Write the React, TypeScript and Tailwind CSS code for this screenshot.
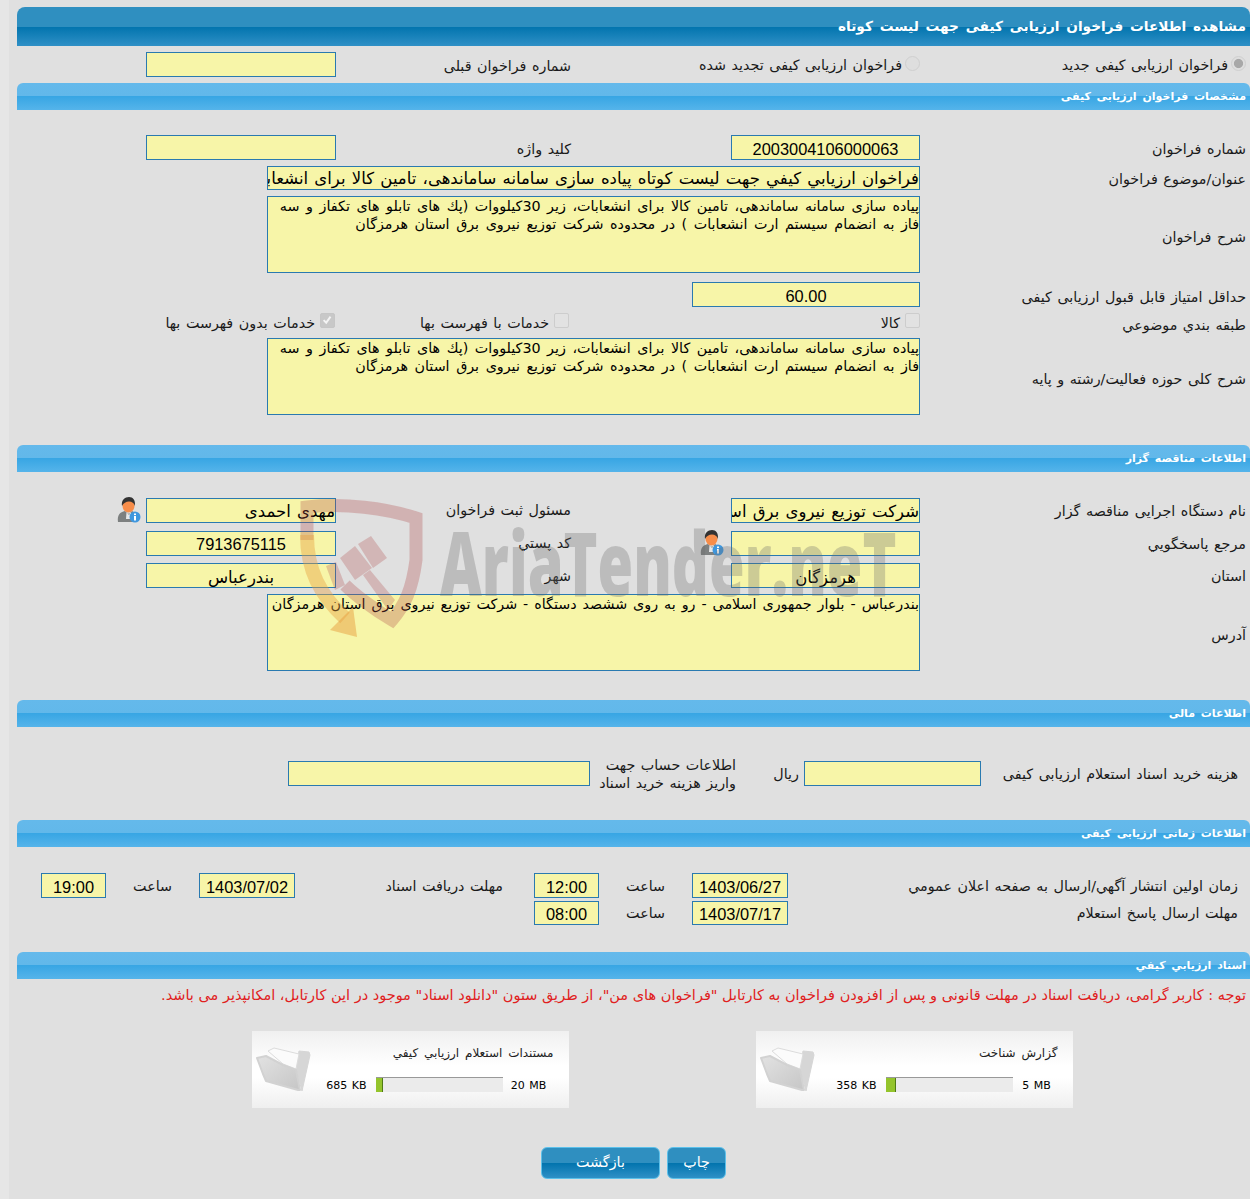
import React from 'react';

const desc =
  'پیاده سازی سامانه ساماندهی، تامین کالا برای انشعابات، زیر 30کیلووات (پك های تابلو های تكفاز و سه فاز به انضمام سیستم ارت انشعابات ) در محدوده شرکت توزیع نیروی برق استان هرمزگان';

const numberFont = "[font-family:'Liberation_Sans','DejaVu_Sans',sans-serif]";
const barGradient = 'bg-[linear-gradient(#2f8fc0_0%,#2f8fc0_50%,#0274ae_51%,#2f90c6_100%)]';

function Section({ title, className = '' }: { title: string; className?: string }) {
  return (
    <div className={`h-[27px] rounded-t-[6px] pr-1 pt-[5px] text-[11px] leading-[17px] font-bold text-white [word-spacing:2px] bg-[linear-gradient(#64b9eb_0%,#62b8ea_48%,#38a6e4_50%,#55b4ea_100%)] ${className}`}>
      {title}
    </div>
  );
}

function Field({ value = '', className = '', num = false }: { value?: string; className?: string; num?: boolean }) {
  return (
    <input
      readOnly
      value={value}
      className={`h-[25px] shrink-0 border border-[#2a7ab0] bg-[#f7f5a8] pt-[3px] text-black outline-none [word-spacing:1px] ${num ? `text-[16.4px] ${numberFont}` : 'text-[16.5px]'} ${className}`}
    />
  );
}

function Area({ value, className = '[word-spacing:2px]' }: { value: string; className?: string }) {
  return (
    <textarea
      readOnly
      value={value}
      className={`block h-[77px] w-[653px] resize-none overflow-hidden border border-[#2a7ab0] bg-[#f7f5a8] text-[14.3px] leading-[18px] text-black outline-none ${className}`}
    />
  );
}

function Label({ children, className = '' }: { children: React.ReactNode; className?: string }) {
  return <div className={`shrink-0 text-[14.3px] leading-[18px] text-[#1a1a1a] ${className}`}>{children}</div>;
}

function Radio({ checked = false }: { checked?: boolean }) {
  return (
    <input
      type="radio"
      disabled
      defaultChecked={checked}
      className="m-0 mb-[2px] ml-[3px] size-[15px] appearance-none rounded-full border border-[#cfcfcf] bg-[#dedede] checked:bg-[radial-gradient(#a8a8a8_45%,#dedede_55%)]"
    />
  );
}

function Check({ checked = false, className = '' }: { checked?: boolean; className?: string }) {
  return (
    <span className={`relative size-[15px] shrink-0 rounded-[2px] border ${checked ? 'border-[#c6c6c6] bg-[#c8c8c8]' : 'border-[#cdcdcd] bg-[#e2e2e2]'} ${className}`}>
      <input type="checkbox" disabled defaultChecked={checked} className="absolute inset-0 m-0 appearance-none" />
      {checked && (
        <svg viewBox="0 0 15 15" className="absolute inset-0 size-[13px]">
          <path d="M3 7l3 3 5-7" fill="none" stroke="#f4f4f4" strokeWidth="2.2" />
        </svg>
      )}
    </span>
  );
}

function UserInfoIcon({ className = '' }: { className?: string }) {
  return (
    <svg viewBox="0 0 24 26" className={`h-[26px] w-[24px] shrink-0 ${className}`}>
      <path d="M1 25c-1-7 2-10 7-11l4 3 3-3c3 1 4 3 4 6v5z" fill="#7d8080" />
      <path d="M9.500 15l2.500 3 2-3 1 7h-6z" fill="#e8e8e8" />
      <ellipse cx="11.500" cy="9" rx="6" ry="6.500" fill="#f78d4a" />
      <path d="M5 9C4 3 8 0 12 0c4 0 6.500 3 6 9-1-3-3-4.500-6-4.500C9 4.500 6.500 6 5 9z" fill="#333" />
      <circle cx="18" cy="20" r="5.500" fill="#3f97de" />
      <rect x="17" y="19" width="2" height="4.500" fill="#fff" />
      <rect x="17" y="16.500" width="2" height="1.600" fill="#fff" />
    </svg>
  );
}

function FolderIcon() {
  return (
    <svg viewBox="0 0 56 46" className="h-[46px] w-[56px] shrink-0">
      <defs>
        <linearGradient id="folderFront" x1="0" y1="0" x2="1" y2="1">
          <stop offset="0" stopColor="#e2e2e2" />
          <stop offset="1" stopColor="#c6c6c6" />
        </linearGradient>
      </defs>
      <path d="M43 4l10 1 1 3-8 36-6-22z" fill="#d6d6d6" stroke="#d6d6d6" strokeLinejoin="round" />
      <path d="M12 4L18 1l25 6-3 15-13-5z" fill="#fbfbfb" stroke="#dcdcdc" strokeLinejoin="round" />
      <path d="M1 11l9-2 17 9 13 5 4 20-2 0-32-9-3-7z" fill="url(#folderFront)" stroke="#d2d2d2" strokeLinejoin="round" strokeWidth="2" />
    </svg>
  );
}

function FileCard({ title, size, total, used, rowPad, barGap }: { title: string; size: string; total: string; used: number; rowPad: string; barGap: string }) {
  return (
    <div className="flex h-[77px] w-[317px] bg-[linear-gradient(#f0f0f0,#ffffff_45%,#ffffff_60%,#efefef)]">
      <div className="w-[255px] shrink-0">
        <div className="mt-[13px] h-[18px] pr-[15px] text-[12px] leading-[18px] text-[#222] [word-spacing:2px]">{title}</div>
        <div className={`mt-[15px] flex items-start ${rowPad}`}>
          <div className="w-[42px] shrink-0 pt-[2px] text-center text-[11px] leading-[14px] text-black" dir="ltr">{total}</div>
          <div className={`ml-[8px] h-[15px] w-[127px] shrink-0 border-t border-[#999] bg-[#ebebeb] ${barGap}`} dir="ltr">
            <div style={{ width: used }} className="h-[14px] border-r border-[#4f7a14] bg-[#94c42c]" />
          </div>
          <div className="w-[42px] shrink-0 pt-[2px] text-center text-[11px] leading-[14px] text-black" dir="ltr">{size}</div>
        </div>
      </div>
      <div className="mt-[16px] mr-[2px]"><FolderIcon /></div>
    </div>
  );
}

function Watermark() {
  return (
    <div className="pointer-events-none absolute left-[290px] top-[490px] h-[160px] w-[630px]">
      <svg viewBox="290 490 150 160" className="absolute left-0 top-0 h-[160px] w-[150px]">
        <path d="M307 540L307 507C345 503 385 508 416 518L416 560C412 590 405 605 392 620C375 610 355 595 345 585" fill="none" stroke="#b14a4a" strokeOpacity="0.3" strokeWidth="13" />
        <path d="M326 566l10-4 9 23-10 5z M340 558l15-12 17 22-17 12z M358 544l13-8 16 22-14 10z M363 575l7-5 25 30-7 10z" fill="#b14a4a" fillOpacity="0.28" />
        <path d="M307 535C307 570 320 595 345 618" fill="none" stroke="#e8a040" strokeOpacity="0.42" strokeWidth="14" />
        <path d="M330 630L353 607L357 637Z" fill="#e8a040" fillOpacity="0.5" />
      </svg>
      <div dir="ltr" className="absolute left-[150px] top-[17px] origin-left scale-x-[0.655] whitespace-nowrap text-[88px] font-extrabold leading-[110px] text-[#6b6b6b]/30 [font-family:'Open_Sans',sans-serif] [word-spacing:0]">
        AriaTender.neT
      </div>
    </div>
  );
}

const rowGrid = 'grid grid-cols-[330px_189px_395px_190px_1fr] items-center';

export default function App() {
  return (
    <div dir="rtl" className="relative h-[1199px] w-[1250px] overflow-hidden bg-[#e0e0e0] pt-[7px] pl-[17px] [font-family:'DejaVu_Sans','Noto_Sans',sans-serif] [word-spacing:1px]">
      <div className="absolute left-0 top-0 h-full w-[9px] bg-[#e6e6e6]" />

      <div className={`h-[39px] rounded-t-[8px] pr-1 pt-[9px] text-[13.7px] leading-[20px] font-bold text-white [word-spacing:2px] ${barGradient}`}>
        مشاهده اطلاعات فراخوان ارزیابی کیفی جهت لیست کوتاه
      </div>

      <div className="mt-[6px] flex h-[25px] items-center">
        <label className="flex w-[330px] shrink-0 items-center pr-[4px] text-[14.3px] text-[#1a1a1a]">
          <Radio checked />
          <span className="pt-[2px]">فراخوان ارزیابی کیفی جدید</span>
        </label>
        <label className="flex w-[349px] shrink-0 items-center text-[14.3px] text-[#1a1a1a]">
          <Radio />
          <span className="pt-[2px]">فراخوان ارزیابی کیفی تجدید شده</span>
        </label>
        <Label className="w-[235px] pt-[2px]">شماره فراخوان قبلی</Label>
        <Field className="w-[190px]" />
      </div>

      <Section title="مشخصات فراخوان ارزیابی کیفی" className="mt-[6px]" />

      <div className={`${rowGrid} mt-[25px] h-[25px]`}>
        <Label className="pr-1 pt-[3px]">شماره فراخوان</Label>
        <Field num value="2003004106000063" className="w-[189px] text-center" />
        <Label className="pr-[160px] pt-[3px]">کلید واژه</Label>
        <Field className="w-[190px]" />
      </div>

      <div className="mt-[6px] flex h-[24px] items-center">
        <Label className="w-[330px] pr-1 pt-[2px]">عنوان/موضوع فراخوان</Label>
        <Field
          value="فراخوان ارزيابي كيفي جهت لیست کوتاه پیاده سازی سامانه ساماندهی، تامین کالا برای انشعابات، زیر 30کیلووات"
          className="!h-[24px] w-[653px]"
        />
      </div>

      <div className="mt-[6px] flex h-[77px] items-center">
        <Label className="w-[330px] pr-1 pt-[5px]">شرح فراخوان</Label>
        <Area value={desc} />
      </div>

      <div className="mt-[9px] flex h-[25px] items-center">
        <Label className="w-[330px] pr-1 pt-[4px]">حداقل امتیاز قابل قبول ارزیابی کیفی</Label>
        <Field num value="60.00" className="w-[228px] text-center" />
      </div>

      <div className="mt-[6px] flex h-[19px] items-center text-[14.3px] text-[#1a1a1a]">
        <Label className="w-[330px] pr-1 pt-[4px]">طبقه بندي موضوعي</Label>
        <label className="flex w-[351px] shrink-0 items-center">
          <Check className="mb-[4px] ml-[5px]" />
          <span className="pt-[3px]">کالا</span>
        </label>
        <label className="flex w-[234px] shrink-0 items-center">
          <Check className="mb-[4px] ml-[5px]" />
          <span className="pt-[3px]">خدمات با فهرست بها</span>
        </label>
        <label className="flex items-center">
          <Check checked className="mb-[4px] ml-[5px]" />
          <span className="pt-[3px]">خدمات بدون فهرست بها</span>
        </label>
      </div>

      <div className="mt-[6px] flex h-[77px] items-center">
        <Label className="w-[330px] pr-1 pt-[5px]">شرح کلی حوزه فعالیت/رشته و پایه</Label>
        <Area value={desc} />
      </div>

      <Section title="اطلاعات مناقصه گزار" className="mt-[30px]" />

      <div className={`${rowGrid} mt-[25px] h-[25px]`}>
        <Label className="pr-1 pt-[2px]">نام دستگاه اجرایی مناقصه گزار</Label>
        <Field value="شرکت توزیع نیروی برق استان هرمزگان" className="w-[189px]" />
        <Label className="pr-[160px]">مسئول ثبت فراخوان</Label>
        <Field value="مهدی احمدی" className="w-[190px]" />
        <UserInfoIcon className="mr-[5px]" />
      </div>
      <div className={`${rowGrid} mt-[8px] h-[25px]`}>
        <Label className="pr-1 pt-[2px]">مرجع پاسخگويي</Label>
        <Field className="w-[189px]" />
        <div className="flex items-center">
          <UserInfoIcon className="mr-[7px]" />
          <Label className="mr-[129px]">کد پستي</Label>
        </div>
        <Field num value="7913675115" className="w-[190px] text-center" />
      </div>
      <div className={`${rowGrid} mt-[8px] h-[25px]`}>
        <Label className="pr-1">استان</Label>
        <Field value="هرمزگان" className="w-[189px] text-center" />
        <Label className="pr-[160px]">شهر</Label>
        <Field value="بندرعباس" className="w-[190px] text-center" />
      </div>

      <div className="mt-[6px] flex h-[77px] items-center">
        <Label className="w-[330px] pr-1 pt-[5px]">آدرس</Label>
        <Area
          value="بندرعباس - بلوار جمهوری اسلامی - رو به روی ششصد دستگاه - شرکت توزیع نیروی برق استان هرمزگان"
          className="[word-spacing:1.4px]"
        />
      </div>

      <Section title="اطلاعات مالی" className="mt-[29px]" />

      <div className="mt-[34px] flex h-[25px] items-center">
        <Label className="w-[269px] pr-[12px]">هزینه خرید اسناد استعلام ارزیابی کیفی</Label>
        <Field className="w-[177px]" />
        <Label className="w-[68px] pr-[5px]">ریال</Label>
        <Label className="w-[146px]">اطلاعات حساب جهت واریز هزینه خرید اسناد</Label>
        <Field className="w-[302px]" />
      </div>

      <Section title="اطلاعات زمانی ارزیابی کیفی" className="mt-[34px]" />

      <div className="mt-[26px] flex h-[25px] items-center">
        <Label className="w-[462px] pr-[12px]">زمان اولين انتشار آگهي/ارسال به صفحه اعلان عمومي</Label>
        <Field num value="1403/06/27" className="w-[96px] text-center" />
        <Label className="w-[93px] pr-[27px]">ساعت</Label>
        <Field num value="12:00" className="w-[65px] text-center" />
        <Label className="w-[239px] pr-[31px]">مهلت دریافت اسناد</Label>
        <Field num value="1403/07/02" className="w-[96px] text-center" />
        <Label className="w-[93px] pr-[27px]">ساعت</Label>
        <Field num value="19:00" className="w-[65px] text-center" />
      </div>
      <div className="mt-[3px] flex h-[24px] items-center">
        <Label className="w-[462px] pr-[12px]">مهلت ارسال پاسخ استعلام</Label>
        <Field num value="1403/07/17" className="!h-[24px] w-[96px] text-center" />
        <Label className="w-[93px] pr-[27px]">ساعت</Label>
        <Field num value="08:00" className="!h-[24px] w-[65px] text-center" />
      </div>

      <Section title="اسناد ارزيابي كيفي" className="mt-[27px]" />

      <div className="mt-[7px] h-[18px] whitespace-nowrap pr-1 text-[14.5px] leading-[18px] text-[#e02020] [word-spacing:0]">
        توجه : کاربر گرامی، دریافت اسناد در مهلت قانونی و پس از افزودن فراخوان به کارتابل "فراخوان های من"، از طریق ستون "دانلود اسناد" موجود در این کارتابل، امکانپذیر می باشد.
      </div>

      <div className="mt-[27px] flex justify-center gap-[187px] pl-[57px]">
        <FileCard title="گزارش شناخت" size="358 KB" total="5 MB" used={10} rowPad="pr-[15px]" barGap="mr-[3px]" />
        <FileCard title="مستندات استعلام ارزيابي كيفي" size="685 KB" total="20 MB" used={7} rowPad="pr-[19px]" barGap="mr-[5px]" />
      </div>

      <div className="mt-[39px] flex justify-center gap-[7px] text-[14.3px] text-white">
        <button className={`h-[32px] w-[59px] rounded-[6px] border border-[#5cc0ea] ${barGradient}`}>چاپ</button>
        <button className={`h-[32px] w-[119px] rounded-[6px] border border-[#5cc0ea] ${barGradient}`}>بازگشت</button>
      </div>

      <Watermark />
    </div>
  );
}
